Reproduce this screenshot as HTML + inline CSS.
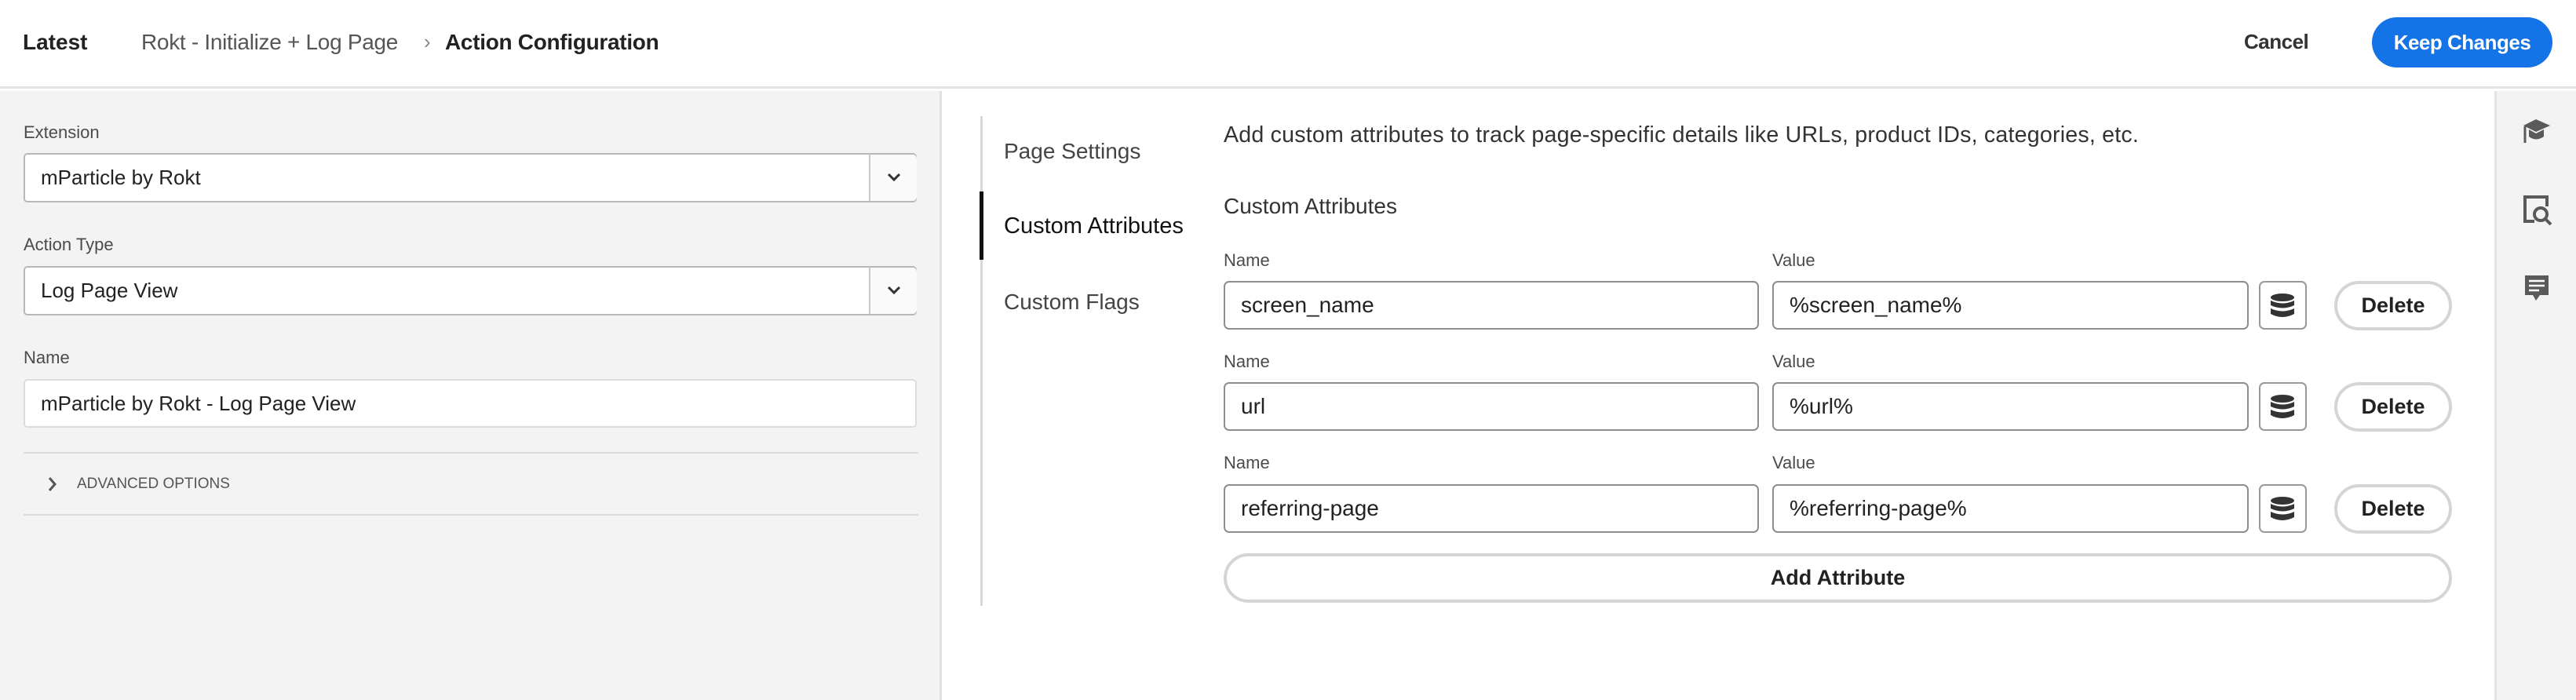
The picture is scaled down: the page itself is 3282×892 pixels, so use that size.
<!DOCTYPE html>
<html><head><meta charset="utf-8"><style>
*{box-sizing:border-box;margin:0;padding:0}
body{width:3282px;height:892px;overflow:hidden;background:#fff;font-family:"Liberation Sans",Arial,sans-serif;color:#222;position:relative}
.a{position:absolute;white-space:nowrap}
.lbl{font-size:22px;color:#4b4b4b}
.box{position:absolute;background:#fff;border:2px solid #8e8e8e;border-radius:7px}
.in{font-size:28px;color:#222;line-height:58px;padding-left:20px}
.lin{font-size:26px;color:#222;padding-left:20px}
.pill{position:absolute;border:4px solid #d5d5d5;border-radius:32px;background:#fff;font-weight:bold;font-size:27px;text-align:center;color:#222}
</style></head><body>
<div class="a" style="left:0;top:0;width:3282px;height:113px;border-bottom:3px solid #e4e4e4;background:#fff"></div>
<div class="a" style="left:29px;top:38px;font-size:28px;font-weight:bold;color:#222">Latest</div>
<div class="a" style="left:180px;top:38px;font-size:28px;color:#555;letter-spacing:-0.3px">Rokt - Initialize + Log Page</div>
<div class="a" style="left:540px;top:38px;font-size:26px;color:#888">›</div>
<div class="a" style="left:567px;top:38px;font-size:28px;font-weight:bold;color:#222;letter-spacing:-0.3px">Action Configuration</div>
<div class="a" style="left:2859px;top:38px;font-size:26px;font-weight:bold;color:#333;letter-spacing:-0.5px">Cancel</div>
<div class="a" style="left:3022px;top:22px;width:230px;height:64px;border-radius:32px;background:#1473e6;color:#fff;font-size:26px;font-weight:bold;text-align:center;line-height:64px;letter-spacing:-0.5px">Keep Changes</div>

<div class="a" style="left:0;top:116px;width:1200px;height:776px;background:#f3f3f3;border-right:3px solid #e1e1e1"></div>
<div class="a lbl" style="left:30px;top:156px">Extension</div>
<div class="box" style="left:30px;top:195px;width:1138px;height:63px;border-color:#b8b8b8;border-radius:5px">
 <div class="lin" style="line-height:59px">mParticle by Rokt</div>
 <div style="position:absolute;left:1075px;top:0;width:61px;height:59px;border-left:2px solid #c8c8c8;background:#fafafa;border-radius:0 5px 5px 0;text-align:center"><svg width="20" height="14" viewBox="0 0 20 14" style="margin-top:22px"><path d="M3 3 L10 10 L17 3" fill="none" stroke="#333" stroke-width="3"/></svg></div>
</div>
<div class="a lbl" style="left:30px;top:299px">Action Type</div>
<div class="box" style="left:30px;top:339px;width:1138px;height:63px;border-color:#b8b8b8;border-radius:5px">
 <div class="lin" style="line-height:59px">Log Page View</div>
 <div style="position:absolute;left:1075px;top:0;width:61px;height:59px;border-left:2px solid #c8c8c8;background:#fafafa;border-radius:0 5px 5px 0;text-align:center"><svg width="20" height="14" viewBox="0 0 20 14" style="margin-top:22px"><path d="M3 3 L10 10 L17 3" fill="none" stroke="#333" stroke-width="3"/></svg></div>
</div>
<div class="a lbl" style="left:30px;top:443px">Name</div>
<div class="box" style="left:30px;top:483px;width:1138px;height:62px;border-color:#dcdcdc;border-radius:5px"><div class="lin" style="line-height:58px">mParticle by Rokt - Log Page View</div></div>
<div class="a" style="left:30px;top:576px;width:1140px;height:2px;background:#dcdcdc"></div>
<svg class="a" style="left:60px;top:606px" width="14" height="22" viewBox="0 0 14 22"><path d="M3 3 L10 11 L3 19" fill="none" stroke="#555" stroke-width="3"/></svg>
<div class="a" style="left:98px;top:606px;font-size:19px;color:#555">ADVANCED OPTIONS</div>
<div class="a" style="left:30px;top:655px;width:1140px;height:2px;background:#dcdcdc"></div>

<div class="a" style="left:1249px;top:148px;width:3px;height:624px;background:#d8d8d8"></div>
<div class="a" style="left:1248px;top:244px;width:5px;height:87px;background:#111"></div>
<div class="a" style="left:1279px;top:177px;font-size:28px;color:#444">Page Settings</div>
<div class="a" style="left:1279px;top:272px;font-size:29px;color:#111">Custom Attributes</div>
<div class="a" style="left:1279px;top:369px;font-size:28px;color:#444">Custom Flags</div>

<div class="a" style="left:1559px;top:156px;font-size:28.6px;color:#333;letter-spacing:0.2px">Add custom attributes to track page-specific details like URLs, product IDs, categories, etc.</div>
<div class="a" style="left:1559px;top:247px;font-size:28px;color:#333">Custom Attributes</div>

<div class="a lbl" style="left:1559px;top:319px">Name</div><div class="a lbl" style="left:2258px;top:319px">Value</div>
<div class="box" style="left:1559px;top:358px;width:682px;height:62px"><div class="in">screen_name</div></div>
<div class="box" style="left:2258px;top:358px;width:607px;height:62px"><div class="in">%screen_name%</div></div>
<div class="box" style="left:2878px;top:358px;width:61px;height:62px;border-color:#999"></div>
<div class="pill" style="left:2974px;top:358px;width:150px;height:63px;line-height:55px">Delete</div>

<div class="a lbl" style="left:1559px;top:448px">Name</div><div class="a lbl" style="left:2258px;top:448px">Value</div>
<div class="box" style="left:1559px;top:487px;width:682px;height:62px"><div class="in">url</div></div>
<div class="box" style="left:2258px;top:487px;width:607px;height:62px"><div class="in">%url%</div></div>
<div class="box" style="left:2878px;top:487px;width:61px;height:62px;border-color:#999"></div>
<div class="pill" style="left:2974px;top:487px;width:150px;height:63px;line-height:55px">Delete</div>

<div class="a lbl" style="left:1559px;top:577px">Name</div><div class="a lbl" style="left:2258px;top:577px">Value</div>
<div class="box" style="left:1559px;top:617px;width:682px;height:62px"><div class="in">referring-page</div></div>
<div class="box" style="left:2258px;top:617px;width:607px;height:62px"><div class="in">%referring-page%</div></div>
<div class="box" style="left:2878px;top:617px;width:61px;height:62px;border-color:#999"></div>
<div class="pill" style="left:2974px;top:617px;width:150px;height:63px;line-height:55px">Delete</div>

<svg class="a" style="left:2891px;top:373px" width="34" height="33" viewBox="0 0 34 33"><g fill="#333"><ellipse cx="17" cy="6" rx="15" ry="5"/><path d="M2 10 Q17 17 32 10 V16 Q17 23 2 16Z"/><path d="M2 20 Q17 27 32 20 V27 Q17 35 2 27Z"/></g></svg>
<svg class="a" style="left:2891px;top:502px" width="34" height="33" viewBox="0 0 34 33"><g fill="#333"><ellipse cx="17" cy="6" rx="15" ry="5"/><path d="M2 10 Q17 17 32 10 V16 Q17 23 2 16Z"/><path d="M2 20 Q17 27 32 20 V27 Q17 35 2 27Z"/></g></svg>
<svg class="a" style="left:2891px;top:632px" width="34" height="33" viewBox="0 0 34 33"><g fill="#333"><ellipse cx="17" cy="6" rx="15" ry="5"/><path d="M2 10 Q17 17 32 10 V16 Q17 23 2 16Z"/><path d="M2 20 Q17 27 32 20 V27 Q17 35 2 27Z"/></g></svg>

<div class="pill" style="left:1559px;top:705px;width:1565px;height:63px;line-height:55px">Add Attribute</div>

<div class="a" style="left:3178px;top:116px;width:104px;height:776px;background:#f3f3f3;border-left:3px solid #e4e4e4"></div>
<svg class="a" style="left:3213px;top:150px" width="38" height="36" viewBox="0 0 38 36"><path d="M18 2 L36 10 L18 18 L2 10Z" fill="#5a5a5a"/><path d="M9 15 V24 Q18 31 28 24 V15 L18 20Z" fill="#5a5a5a"/><path d="M4 11 V32" stroke="#5a5a5a" stroke-width="3"/></svg>
<svg class="a" style="left:3215px;top:249px" width="38" height="38" viewBox="0 0 38 38"><path d="M14 33 H2 V2 H30 V14" fill="none" stroke="#5a5a5a" stroke-width="4"/><circle cx="22" cy="24" r="8" fill="none" stroke="#5a5a5a" stroke-width="4"/><path d="M28 30 L35 37" stroke="#5a5a5a" stroke-width="4"/></svg>
<svg class="a" style="left:3215px;top:349px" width="34" height="36" viewBox="0 0 34 36"><path d="M2 2 H32 V27 H21 L16 34 L12 27 H2Z" fill="#5a5a5a"/><path d="M7 9 H27 M7 15 H27 M7 21 H20" stroke="#fff" stroke-width="2.5"/></svg>
</body></html>
